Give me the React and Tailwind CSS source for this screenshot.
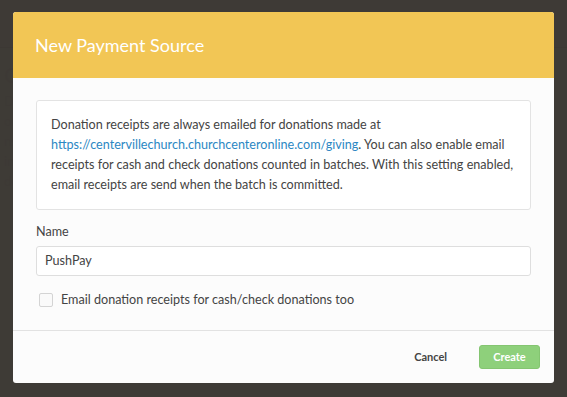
import React from 'react';

const Background = () => (
  <div className="w-full h-full text-[#e8e4dc] font-['Lato',sans-serif]">
    <div className="h-[48px] border-b border-[#d8d4cc] bg-[#f4f1ec]" />
    <div className="px-[4px] pt-[10px] text-[22px]">Com</div>
    <div className="px-[4px] text-[13px] leading-[20px]">
      <div>Den</div>
      <div>ons</div>
      <div>nsu</div>
      <div>ing</div>
      <div>do</div>
    </div>
  </div>
);

const App = () => {
  return (
    <div className="relative w-[567px] h-[397px] overflow-hidden bg-[#f7f5f1] font-['Lato','Open_Sans',sans-serif]">
      <Background />
      <div className="absolute inset-0 bg-[#2f2c28]/[0.93] pt-[12px] pl-[13px]">
        <div className="w-[541px] h-[371px] rounded-[3px] overflow-hidden bg-[#fcfcfc] flex flex-col">
          <div className="h-[66px] shrink-0 bg-[#f2c655] px-[22px] flex items-center">
            <h1 className="text-[18px] text-white">New Payment Source</h1>
          </div>
          <div className="px-[23px] pt-[22px] pb-[20px] border-b border-[#e2e2e2]">
            <div className="bg-white border border-[#e3e3e3] rounded-[3px] px-[14px] py-[14px] text-[12.6px] leading-[20px] text-[#444]">
              Donation receipts are always emailed for donations made at{' '}
              <a className="text-[#2b87c3]">https://centervillechurch.churchcenteronline.com/giving</a>. You can also enable email receipts for cash and check donations counted in batches. With this setting enabled, email receipts are send when the batch is committed.
            </div>
            <div className="mt-[12px] mb-[4px] text-[12.6px] leading-[20px] text-[#444]">Name</div>
            <div className="h-[30px] bg-white border border-[#dedede] rounded-[3px] px-[8px] flex items-center text-[12.6px] text-[#444]">
              PushPay
            </div>
            <label className="mt-[14px] flex items-center h-[20px] pl-[3px] text-[12.6px] text-[#444]">
              <span className="w-[14px] h-[14px] border border-[#d4d4d4] rounded-[2px] bg-[#fafafa] mr-[8px]" />
              Email donation receipts for cash/check donations too
            </label>
          </div>
          <div className="flex-1 flex items-center justify-end pr-[14px] gap-[32px]">
            <button className="text-[11px] font-bold text-[#444]">Cancel</button>
            <button className="h-[24px] w-[61px] rounded-[3px] bg-[#8ed07b] border border-[#84c571] text-[11px] font-bold text-white">Create</button>
          </div>
        </div>
      </div>
    </div>
  );
};

export default App;
